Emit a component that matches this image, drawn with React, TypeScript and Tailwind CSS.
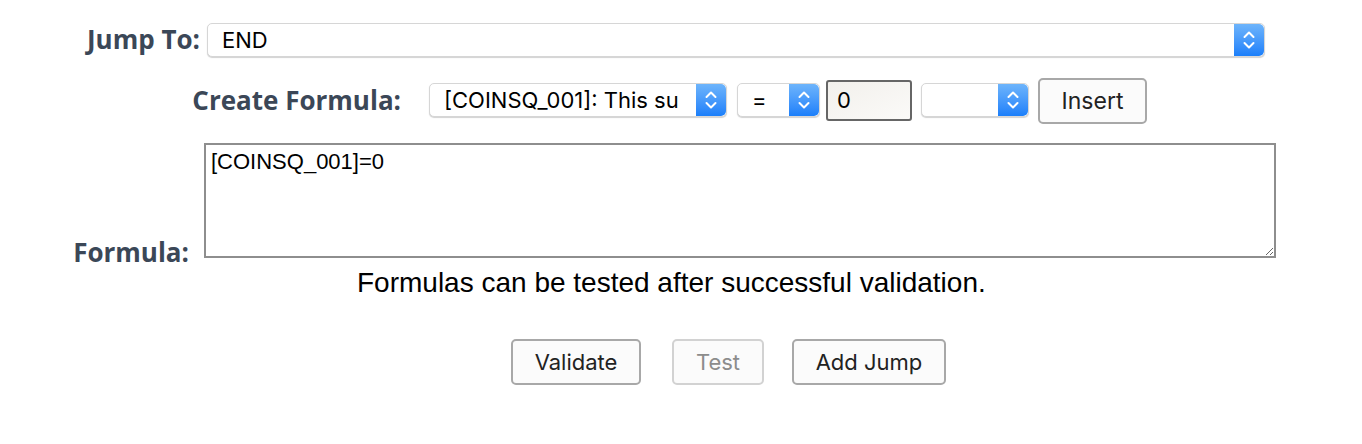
function Stepper() {
  return (
    <div className="flex h-full w-[30px] shrink-0 items-center justify-center rounded-r-[5px] bg-gradient-to-b from-[#6db4fb] to-[#1a7ffa]">
      <svg width="14" height="22" viewBox="0 0 14 22" fill="none" stroke="white" strokeWidth="2" strokeLinecap="round" strokeLinejoin="round">
        <path d="M2.5 8 L7 3.5 L11.5 8" />
        <path d="M2.5 14 L7 18.5 L11.5 14" />
      </svg>
    </div>
  );
}

function Select({ value, className }: { value: string; className: string }) {
  return (
    <div
      className={`flex h-[34px] items-center overflow-hidden rounded-[5px] border border-[#d6d6d6] bg-white shadow-[0_1px_1px_rgba(0,0,0,0.18)] ${className}`}
    >
      <span className="flex-1 overflow-hidden whitespace-nowrap pl-[14px] text-[22px] leading-[30px] text-black">{value}</span>
      <Stepper />
    </div>
  );
}

const label = "font-['Open_Sans',sans-serif] text-[26px] font-bold text-[#3b4757] text-right whitespace-nowrap";

function Btn({ text, disabled, className }: { text: string; disabled?: boolean; className: string }) {
  return (
    <button
      className={`flex h-[46px] items-center justify-center rounded-[5px] border-2 bg-[#fbfbfb] text-[22px] ${
        disabled ? "border-[#d2d2d2] text-[#8c8c8c]" : "border-[#a8a8a8] text-[#222]"
      } ${className}`}
    >
      {text}
    </button>
  );
}

export default function App() {
  return (
    <div className="h-[444px] w-[1362px] overflow-hidden bg-white font-['Inter',sans-serif]">
      {/* clipped intro line */}
      <p className="mt-[-22px] pl-[212px] font-['Liberation_Sans',sans-serif] text-[22px] leading-[20px] text-black whitespace-nowrap">
        Specify the jump destination, then put your formula together by using the helper inputs or by typing it in below.
      </p>

      {/* Jump To */}
      <div className="mt-[22px] flex items-center">
        <div className={`w-[200px] ${label}`}>Jump To:</div>
        <Select value="END" className="ml-[7px] w-[1058px]" />
      </div>

      {/* Create Formula */}
      <div className="mt-[17px] flex items-center">
        <div className={`w-[401px] ${label}`}>Create Formula:</div>
        <Select value="[COINSQ_001]: This su" className="ml-[28px] w-[298px]" />
        <Select value="=" className="ml-[10px] w-[83px]" />
        <div className="ml-[6px] flex h-[41px] w-[86px] items-center rounded-[3px] border-2 border-[#666] bg-gradient-to-br from-[#f2f0ec] to-[#fbfaf8] pl-[9px] text-[22px] text-black">
          0
        </div>
        <Select value="" className="ml-[9px] w-[108px]" />
        <Btn text="Insert" className="ml-[9px] mt-[2px] h-[44px] w-[109px] text-[23px]" />
      </div>

      {/* Formula */}
      <div className="mt-[19px] flex items-end">
        <div className={`w-[189px] leading-[12px] ${label}`}>Formula:</div>
        <textarea
          defaultValue="[COINSQ_001]=0"
          className="ml-[15px] h-[115px] w-[1072px] resize border-2 border-[#8e8e8e] bg-white px-[5px] py-[4px] font-['Liberation_Sans',sans-serif] text-[22px] leading-[26px] text-black outline-none"
        />
      </div>

      <p className="mt-[9px] pl-[357px] font-['Liberation_Sans',sans-serif] text-[28px] leading-[32px] text-black">
        Formulas can be tested after successful validation.
      </p>

      <div className="mt-[40px] flex">
        <Btn text="Validate" className="ml-[511px] w-[130px]" />
        <Btn text="Test" disabled className="ml-[31px] w-[92px]" />
        <Btn text="Add Jump" className="ml-[28px] w-[154px]" />
      </div>
    </div>
  );
}
